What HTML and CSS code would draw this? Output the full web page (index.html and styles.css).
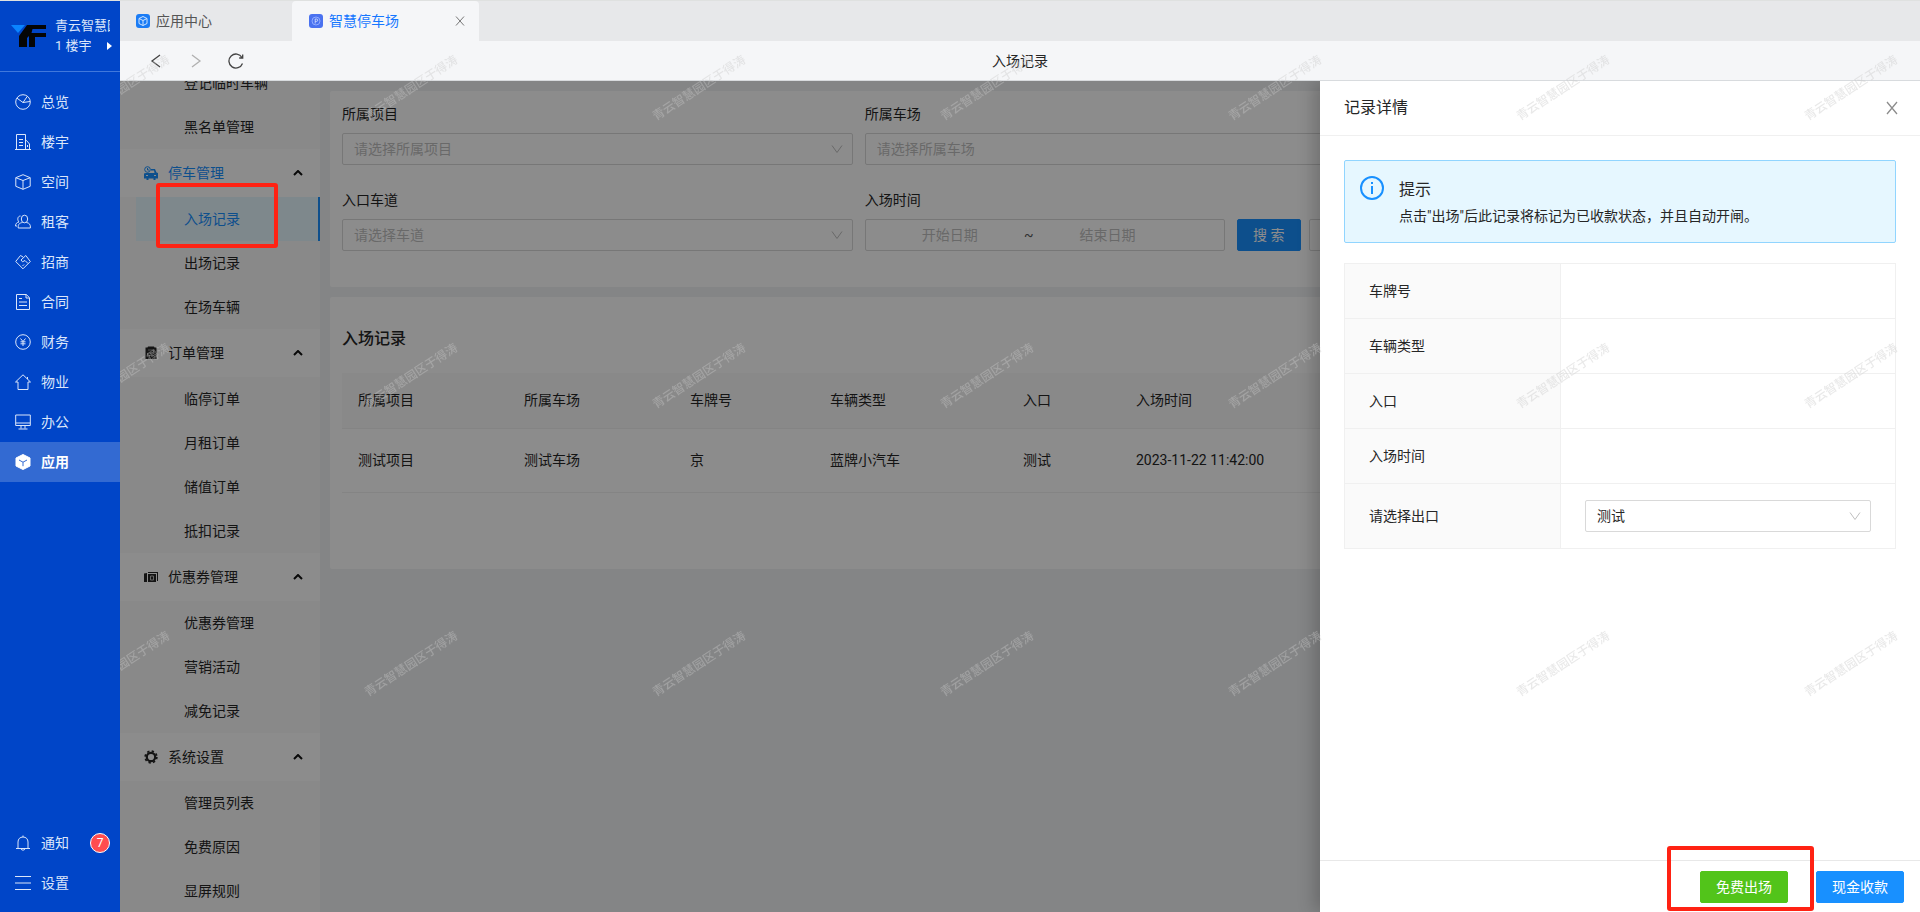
FILE: index.html
```
<!DOCTYPE html>
<html lang="zh-CN">
<head>
  <meta charset="UTF-8">
  <title>智慧停车场</title>
  <link rel="stylesheet" href="styles.css">
</head>
<body>

  <!-- 左侧主导航 -->
  <aside class="sidebar">
    <div class="brand">
      <svg class="logo" viewBox="0 0 36 24" width="36" height="24">
        <path d="M0 1h14l-7 8z" fill="#0a84ff"/>
        <path d="M16 1h19v4H21.500l-1 4H35v4H24v10h-6V12l-2 2v9H8V12z" fill="#050505"/>
      </svg>
      <div class="brand-text">
        <div class="brand-name">青云智慧园区</div>
        <div class="brand-sub">1 楼宇 <svg viewBox="0 0 5 8" width="5" height="8"><path d="M0 0l5 4-5 4z" fill="#fff"/></svg></div>
      </div>
    </div>
    <nav class="nav">
      <a href="#"><svg class="icon" viewBox="0 0 16 16"><circle cx="8" cy="8" r="7.300"/><path d="M2 4.200L8 8.500l7-1M8 8.500l4.200-6"/></svg>总览</a>
      <a href="#"><svg class="icon" viewBox="0 0 16 16"><path d="M0 15.500h16M1.500 15.500V.500h9v15M10.500 6.500h1l3 3.500v5.500M4 5.500h4M4 8.500h4M4 11.500h4M12.500 11v2"/></svg>楼宇</a>
      <a href="#"><svg class="icon" viewBox="0 0 16 16"><path d="M8 .700l7.200 3v8.600L8 15.300l-7.200-3V3.700zM.800 3.700L8 6.500l7.200-2.800M8 6.500v8.800"/></svg>空间</a>
      <a href="#"><svg class="icon" viewBox="0 0 16 16"><ellipse cx="9.500" cy="5" rx="3.200" ry="3.800"/><path d="M7.500 8.500c-3 .500-4.500 1.500-4.300 5.500h12.200c.3-3.500-1-5-4-5.500M5.500 2C2.500 2 2 6 4 8 2 8.300.500 9.500.500 12H2"/></svg>租客</a>
      <a href="#"><svg class="icon" viewBox="0 0 16 16"><path d="M8 3L5.500 1.500.700 7.500 8 14.800l7.300-7.300-4.500-6L6 6l1.500 1.800L10 6.500l3 3M7.500 12l1.500-1.500"/></svg>招商</a>
      <a href="#"><svg class="icon" viewBox="0 0 16 16"><path d="M1.500.500h9.800l3.200 3.200v11.800h-13zM11 .500v3.500h3.500M4 4.500h3M4 8h8M4 11.500h8"/></svg>合同</a>
      <a href="#"><svg class="icon" viewBox="0 0 16 16"><circle cx="8" cy="8" r="7.300"/><path d="M5.500 4.500L8 7.500l2.500-3M8 7.500v4.500M5.500 7.800h5M5.500 9.800h5"/></svg>财务</a>
      <a href="#"><svg class="icon" viewBox="0 0 16 16"><path d="M.500 8L8 .800 15.500 8H13v7.500H3V8zM12.500 3v2"/></svg>物业</a>
      <a href="#"><svg class="icon" viewBox="0 0 16 16"><path d="M.700 1h14.600v10.500H.700zM.700 9h14.600M6 11.500v3M10 11.500v3M3.500 15h9"/></svg>办公</a>
      <a href="#" class="active"><svg class="icon" viewBox="0 0 16 16"><path d="M8 .500l7 3.500v8l-7 3.500L1 12V4z" fill="#fff" stroke="#fff"/><path d="M4 6l4 2.200L12 6M8 8.200v4" stroke="#336ad2"/></svg>应用</a>
    </nav>
    <nav class="nav nav-bottom">
      <a href="#"><svg class="icon" viewBox="0 0 16 16"><path d="M1 13.500h14M3 13V7c0-3 2-5 5-5s5 2 5 5v6M8 .500V2M6 14c.5 1.500 3.500 1.500 4 0"/></svg>通知<span class="badge">7</span></a>
      <a href="#"><svg class="icon" viewBox="0 0 16 16"><path d="M0 1.500h16M0 8h16M0 14.500h16"/></svg>设置</a>
    </nav>
  </aside>

  <div class="page">
    <!-- 标签页 -->
    <div class="tabs">
      <a href="#" class="tab">
        <svg viewBox="0 0 14 14" width="14" height="14"><rect width="14" height="14" rx="3" fill="#1b7cf5"/><path d="M7 2.500l4 2v5l-4 2-4-2v-5zM3 4.500l4 2 4-2M7 6.500v5" fill="none" stroke="#cfe4ff"/></svg>
        应用中心
      </a>
      <div class="tab current">
        <svg viewBox="0 0 14 14" width="14" height="14"><rect width="14" height="14" rx="3" fill="#4a72f0"/><circle cx="7" cy="7" r="4" fill="none" stroke="#8fabff"/><path d="M6.200 9.500V5h1.300a1.200 1.200 0 0 1 0 2.400H6.200" fill="none" stroke="#dbe5ff" stroke-width=".8"/></svg>
        <a href="#">智慧停车场</a>
        <button class="icon-btn tab-close" aria-label="关闭标签"><svg viewBox="0 0 10 10" width="10" height="10"><path d="M1 .500l8 9M9 .500l-8 9"/></svg></button>
      </div>
    </div>
    <div class="toolbar">
      <button class="icon-btn" aria-label="后退"><svg viewBox="0 0 16 16" width="16" height="16"><path d="M12 2L4 8l8 6"/></svg></button>
      <button class="icon-btn disabled" aria-label="前进"><svg viewBox="0 0 16 16" width="16" height="16"><path d="M4 2l8 6-8 6"/></svg></button>
      <button class="icon-btn" aria-label="刷新"><svg viewBox="0 0 16 16" width="16" height="16"><path d="M14.500 10.500A7 7 0 1 1 14 4.500M14.700 1.500V5h-3.500"/></svg></button>
      <h1 class="page-title">入场记录</h1>
    </div>

    <div class="content">
      <!-- 二级菜单 -->
      <nav class="submenu">
        <div class="submenu-list">
          <a href="#">登记临时车辆</a>
          <a href="#">黑名单管理</a>
          <button class="group open">
            <svg class="group-icon" viewBox="0 0 14 14"><circle cx="3.500" cy="3.500" r="2.800" fill="none" stroke="currentColor"/><path d="M3.500 2v2H5" fill="none" stroke="currentColor"/><path d="M7 3h4l1.500 3.500L14 7v5.500h-2.500V14H9.500v-1.500h-5V14h-2v-1.500H0V7.500L2 7h8.500L10 4.500H7z" fill="currentColor"/><path d="M2 9.500h2M10 9.500h2" fill="none" stroke="#fff"/></svg>
            停车管理
            <svg class="caret" viewBox="0 0 10 6"><path d="M1 5l4-4 4 4"/></svg>
          </button>
          <a href="#" class="selected">入场记录</a>
          <a href="#">出场记录</a>
          <a href="#">在场车辆</a>
          <button class="group">
            <svg class="group-icon" viewBox="0 0 14 14"><path d="M4 .500h6l.5 1h2V13h-11V1.500h2z" fill="currentColor"/><path d="M4 4h5.500v3H4v2.500h5M4 7v4M9.500 9.500L11.500 12" fill="none" stroke="#aaa" stroke-width=".8"/></svg>
            订单管理
            <svg class="caret" viewBox="0 0 10 6"><path d="M1 5l4-4 4 4"/></svg>
          </button>
          <a href="#">临停订单</a>
          <a href="#">月租订单</a>
          <a href="#">储值订单</a>
          <a href="#">抵扣记录</a>
          <button class="group">
            <svg class="group-icon" viewBox="0 0 14 14"><path d="M0 3.500L3 3v9H0zM4 2h10v9h-1V3H4zM4 4h8v8H4z" fill="currentColor"/><path d="M6.500 6h3v4h-3z" fill="none" stroke="#bbb"/></svg>
            优惠券管理
            <svg class="caret" viewBox="0 0 10 6"><path d="M1 5l4-4 4 4"/></svg>
          </button>
          <a href="#">优惠券管理</a>
          <a href="#">营销活动</a>
          <a href="#">减免记录</a>
          <button class="group">
            <svg class="group-icon" viewBox="0 0 14 14"><circle cx="7" cy="7" r="4.200" fill="none" stroke="currentColor" stroke-width="2.200"/><circle cx="7" cy="7" r="5.800" fill="none" stroke="currentColor" stroke-width="1.800" stroke-dasharray="2.300 2.255"/></svg>
            系统设置
            <svg class="caret" viewBox="0 0 10 6"><path d="M1 5l4-4 4 4"/></svg>
          </button>
          <a href="#">管理员列表</a>
          <a href="#">免费原因</a>
          <a href="#">显屏规则</a>
        </div>
      </nav>

      <main class="main">
        <form class="card filters">
          <div class="field">
            <label for="project">所属项目</label>
            <div class="select">
              <select id="project" class="placeholder"><option>请选择所属项目</option></select>
              <svg viewBox="0 0 12 12"><path d="M1 2.500l5 7 5-7"/></svg>
            </div>
          </div>
          <div class="field">
            <label for="park">所属车场</label>
            <div class="select">
              <select id="park" class="placeholder"><option>请选择所属车场</option></select>
              <svg viewBox="0 0 12 12"><path d="M1 2.500l5 7 5-7"/></svg>
            </div>
          </div>
          <div class="field first">
            <label for="lane">入口车道</label>
            <div class="select">
              <select id="lane" class="placeholder"><option>请选择车道</option></select>
              <svg viewBox="0 0 12 12"><path d="M1 2.500l5 7 5-7"/></svg>
            </div>
          </div>
          <div class="field wide">
            <label for="start">入场时间</label>
            <div class="field-row">
              <div class="range">
                <input id="start" type="text" placeholder="开始日期">
                <span>~</span>
                <input type="text" placeholder="结束日期" aria-label="结束日期">
              </div>
              <div class="actions">
                <button type="button" class="btn primary">搜 索</button>
                <button type="button" class="btn">重 置</button>
              </div>
            </div>
          </div>
        </form>

        <section class="card records">
          <h2>入场记录</h2>
          <table class="record-table">
            <colgroup><col class="c1"><col class="c1"><col class="c2"><col class="c3"><col class="c4"><col></colgroup>
            <thead>
              <tr><th>所属项目</th><th>所属车场</th><th>车牌号</th><th>车辆类型</th><th>入口</th><th>入场时间</th></tr>
            </thead>
            <tbody>
              <tr><td>测试项目</td><td>测试车场</td><td>京</td><td>蓝牌小汽车</td><td>测试</td><td>2023-11-22 11:42:00</td></tr>
            </tbody>
          </table>
        </section>
      </main>

      <div class="mask"></div>

      <!-- 记录详情抽屉 -->
      <section class="drawer">
        <header class="drawer-header">
          <h2>记录详情</h2>
          <button class="icon-btn" aria-label="关闭"><svg viewBox="0 0 12 14" width="12" height="14"><path d="M1 1l10 12M11 1L1 13"/></svg></button>
        </header>
        <div class="drawer-body">
          <div class="alert">
            <svg viewBox="0 0 24 24" width="24" height="24"><circle cx="12" cy="12" r="11" fill="none" stroke="#1890ff" stroke-width="2"/><path d="M11 10h2v8h-2zM11 6h2v2h-2z" fill="#1890ff"/></svg>
            <div>
              <h3>提示</h3>
              <p>点击"出场"后此记录将标记为已收款状态，并且自动开闸。</p>
            </div>
          </div>
          <table class="detail">
            <tr><th scope="row">车牌号</th><td></td></tr>
            <tr><th scope="row">车辆类型</th><td></td></tr>
            <tr><th scope="row">入口</th><td></td></tr>
            <tr><th scope="row">入场时间</th><td></td></tr>
            <tr>
              <th scope="row"><label for="exit">请选择出口</label></th>
              <td>
                <div class="select">
                  <select id="exit"><option>测试</option></select>
                  <svg viewBox="0 0 12 12"><path d="M1 2.500l5 7 5-7"/></svg>
                </div>
              </td>
            </tr>
          </table>
        </div>
        <footer class="drawer-footer">
          <button class="btn success">免费出场</button>
          <button class="btn primary">现金收款</button>
        </footer>
      </section>
    </div>
  </div>

  <!-- 水印 -->
  <svg class="watermark" aria-hidden="true">
    <defs>
      <pattern id="wm" x="-141" y="-56" width="288" height="288" patternUnits="userSpaceOnUse">
        <text x="144" y="148" text-anchor="middle" transform="rotate(-33 144 144)">青云智慧园区于得涛</text>
      </pattern>
    </defs>
    <rect width="100%" height="100%" fill="url(#wm)"/>
  </svg>

  <!-- 红框标注 -->
  <div class="marker marker-menu"></div>
  <div class="marker marker-button"></div>

</body>
</html>
```

FILE: styles.css
```
* {
  box-sizing: border-box;
}

body {
  margin: 0;
  height: 100vh;
  display: flex;
  border-top: 1px solid #dfe1e0;
  font-family: Roboto, "Noto Sans CJK SC", sans-serif;
  font-size: 14px;
  line-height: 22px;
  color: #262626;
  overflow: hidden;
  position: relative;
}

h1, h2, h3, p {
  margin: 0;
  font-weight: normal;
}

a {
  color: inherit;
  text-decoration: none;
}

button, input, select {
  font: inherit;
  color: inherit;
}

/* 左侧主导航 */
.sidebar {
  width: 120px;
  flex: none;
  display: flex;
  flex-direction: column;
  background: #0045c8;
  color: #dbe6fa;
  padding-bottom: 9px;
}

.brand {
  height: 71px;
  flex: none;
  display: flex;
  gap: 8px;
  padding: 15px 8px 0 11px;
  border-bottom: 1px solid #4078dc;
}

.logo {
  flex: none;
  margin-top: 8px;
}

.brand-text {
  flex: 1;
  min-width: 0;
  font-size: 13px;
  line-height: 20px;
  white-space: nowrap;
}

.brand-name {
  margin-right: 2px;
  overflow: hidden;
}

.brand-sub {
  display: flex;
  align-items: center;
  justify-content: space-between;
}

.nav {
  padding-top: 10px;
}

.nav-bottom {
  margin-top: auto;
}

.nav a {
  display: flex;
  align-items: center;
  gap: 10px;
  height: 40px;
  padding: 0 10px 0 15px;
}

.nav a.active {
  background: #336ad2;
  color: #fff;
  font-weight: bold;
}

.icon {
  width: 16px;
  height: 16px;
  fill: none;
  stroke: #dbe6fa;
}

.badge {
  width: 20px;
  height: 20px;
  margin-left: auto;
  border: 1px solid #fff;
  border-radius: 50%;
  background: #ff4d4f;
  color: #fff;
  font-size: 12px;
  line-height: 18px;
  text-align: center;
}

/* 顶部标签和工具栏 */
.page {
  flex: 1;
  min-width: 0;
  display: flex;
  flex-direction: column;
}

.tabs {
  display: flex;
  height: 40px;
  flex: none;
  background: #e7e8ea;
}

.tab {
  display: flex;
  align-items: center;
  gap: 6px;
  width: 172px;
  padding: 0 16px;
  color: #555;
}

.tab.current {
  width: 187px;
  padding-left: 17px;
  background: #f5f6f8;
  border-radius: 4px 4px 0 0;
  color: #1677ff;
}

.icon-btn {
  display: flex;
  align-items: center;
  justify-content: center;
  width: 16px;
  height: 16px;
  padding: 0;
  border: none;
  background: none;
  cursor: pointer;
}

.icon-btn svg {
  fill: none;
  stroke: #444;
  stroke-width: 1.3;
}

.icon-btn.disabled svg {
  stroke: #b0b0b0;
}

.tab-close {
  margin-left: auto;
  margin-right: -5px;
}

.tab-close svg {
  stroke: #777;
  stroke-width: 1;
}

.toolbar {
  display: flex;
  align-items: center;
  gap: 24px;
  height: 40px;
  flex: none;
  padding-left: 28px;
  background: #f5f6f8;
  border-bottom: 1px solid #d8dbde;
  position: relative;
}

.page-title {
  position: absolute;
  left: 0;
  right: 0;
  text-align: center;
  font-size: 14px;
  pointer-events: none;
}

.content {
  flex: 1;
  min-height: 0;
  display: flex;
  position: relative;
  background: #f0f2f5;
  overflow: hidden;
}

/* 二级菜单，已向下滚动 */
.submenu {
  width: 200px;
  flex: none;
  background: #fafafa;
  overflow: hidden;
}

.submenu-list {
  margin-top: -20px;
}

.submenu a {
  display: block;
  height: 44px;
  margin-left: 16px;
  padding-left: 48px;
  line-height: 44px;
}

.submenu a.selected {
  background: #e6f7ff;
  border-right: 2px solid #1890ff;
  color: #1890ff;
}

.group {
  display: flex;
  align-items: center;
  gap: 10px;
  width: 100%;
  height: 48px;
  padding: 0 17px 0 24px;
  border: none;
  background: #fff;
}

.group.open {
  color: #1890ff;
}

.group-icon {
  width: 14px;
  height: 14px;
}

.caret {
  width: 10px;
  height: 6px;
  margin-left: auto;
  fill: none;
  stroke: #111;
  stroke-width: 2;
}

/* 主内容 */
.main {
  flex: 1;
  min-width: 0;
  display: flex;
  flex-direction: column;
  gap: 10px;
  padding: 10px;
}

.card {
  background: #fff;
  border-radius: 2px;
}

.filters {
  display: grid;
  grid-template-columns: repeat(3, 1fr);
  gap: 24px 12px;
  padding: 12px 12px 36px;
}

.field {
  display: flex;
  flex-direction: column;
  gap: 8px;
}

.field.first {
  grid-column: 1;
}

.field.wide {
  grid-column: span 2;
}

.field-row {
  display: flex;
  gap: 12px;
}

.actions {
  display: flex;
  gap: 8px;
}

.select {
  display: grid;
  align-items: center;
}

.select select {
  grid-area: 1 / 1;
  width: 100%;
  height: 32px;
  padding: 0 11px;
  border: 1px solid #d9d9d9;
  border-radius: 2px;
  background: #fff;
  appearance: none;
}

.select select.placeholder {
  color: #bfbfbf;
}

.select svg {
  grid-area: 1 / 1;
  justify-self: end;
  width: 12px;
  height: 12px;
  margin-right: 10px;
  fill: none;
  stroke: #bfbfbf;
  pointer-events: none;
}

.range {
  display: flex;
  align-items: center;
  width: 360px;
  height: 32px;
  padding: 0 42px 0 10px;
  border: 1px solid #d9d9d9;
  border-radius: 2px;
}

.range span {
  color: #595959;
}

.range input {
  flex: 1;
  min-width: 0;
  padding: 0;
  border: none;
  background: none;
  text-align: center;
}

.range input::placeholder {
  color: #bfbfbf;
}

.btn {
  min-width: 64px;
  height: 32px;
  padding: 0 15px;
  border: 1px solid #d9d9d9;
  border-radius: 2px;
  background: #fff;
  line-height: 22px;
}

.btn.primary {
  border-color: #1890ff;
  background: #1890ff;
  color: #fff;
}

.btn.success {
  border-color: #52c41a;
  background: #52c41a;
  color: #fff;
}

.records {
  padding: 30px 12px 76px;
}

.records h2 {
  margin-bottom: 22px;
  font-size: 16px;
  line-height: 24px;
  font-weight: 500;
}

.record-table {
  width: 100%;
  border-collapse: collapse;
  table-layout: fixed;
}

.record-table th,
.record-table td {
  padding: 0 16px;
  border-bottom: 1px solid #f0f0f0;
  text-align: left;
  font-weight: normal;
}

.record-table th {
  height: 55px;
  background: #fafafa;
}

.record-table td {
  height: 64px;
}

.c1 { width: 166px; }
.c2 { width: 140px; }
.c3 { width: 193px; }
.c4 { width: 113px; }

.mask {
  position: absolute;
  inset: 0;
  background: rgba(0, 0, 0, 0.45);
}

/* 抽屉 */
.drawer {
  position: absolute;
  top: 0;
  right: 0;
  bottom: 0;
  width: 600px;
  display: flex;
  flex-direction: column;
  background: #fff;
  box-shadow: -6px 0 16px rgba(0, 0, 0, 0.2);
}

.drawer-header {
  display: flex;
  align-items: center;
  justify-content: space-between;
  height: 55px;
  padding: 0 20px 0 24px;
  border-bottom: 1px solid #f0f0f0;
}

.drawer-header h2 {
  font-size: 16px;
}

.drawer-header svg {
  stroke: #8c8c8c;
}

.drawer-body {
  flex: 1;
  padding: 24px;
}

.alert {
  display: flex;
  gap: 15px;
  margin-bottom: 20px;
  padding: 15px;
  border: 1px solid #91d5ff;
  border-radius: 2px;
  background: #e6f7ff;
}

.alert h3 {
  margin: 2px 0 3px;
  font-size: 16px;
  line-height: 24px;
}

.detail {
  width: 100%;
  border-collapse: collapse;
  table-layout: fixed;
}

.detail th,
.detail td {
  height: 55px;
  padding: 0 24px;
  border: 1px solid #f0f0f0;
}

.detail th {
  width: 216px;
  background: #fafafa;
  text-align: left;
  font-weight: normal;
}

.detail tr:last-child th {
  height: 65px;
}

.drawer-footer {
  display: flex;
  justify-content: flex-end;
  gap: 28px;
  padding: 10px 16px 9px;
  border-top: 1px solid #e8e8e8;
}

/* 水印和标注 */
.watermark {
  position: absolute;
  top: -1px;
  left: 120px;
  width: calc(100% - 120px);
  height: 100vh;
  font-size: 12px;
  font-weight: 500;
  fill: rgba(200, 200, 200, 0.4);
  pointer-events: none;
}

.marker {
  position: absolute;
  border: 4px solid #ff2213;
  border-radius: 3px;
  pointer-events: none;
}

.marker-menu {
  left: 156px;
  top: 182px;
  width: 122px;
  height: 65px;
}

.marker-button {
  right: 106px;
  bottom: 1px;
  width: 147px;
  height: 65px;
}
```
